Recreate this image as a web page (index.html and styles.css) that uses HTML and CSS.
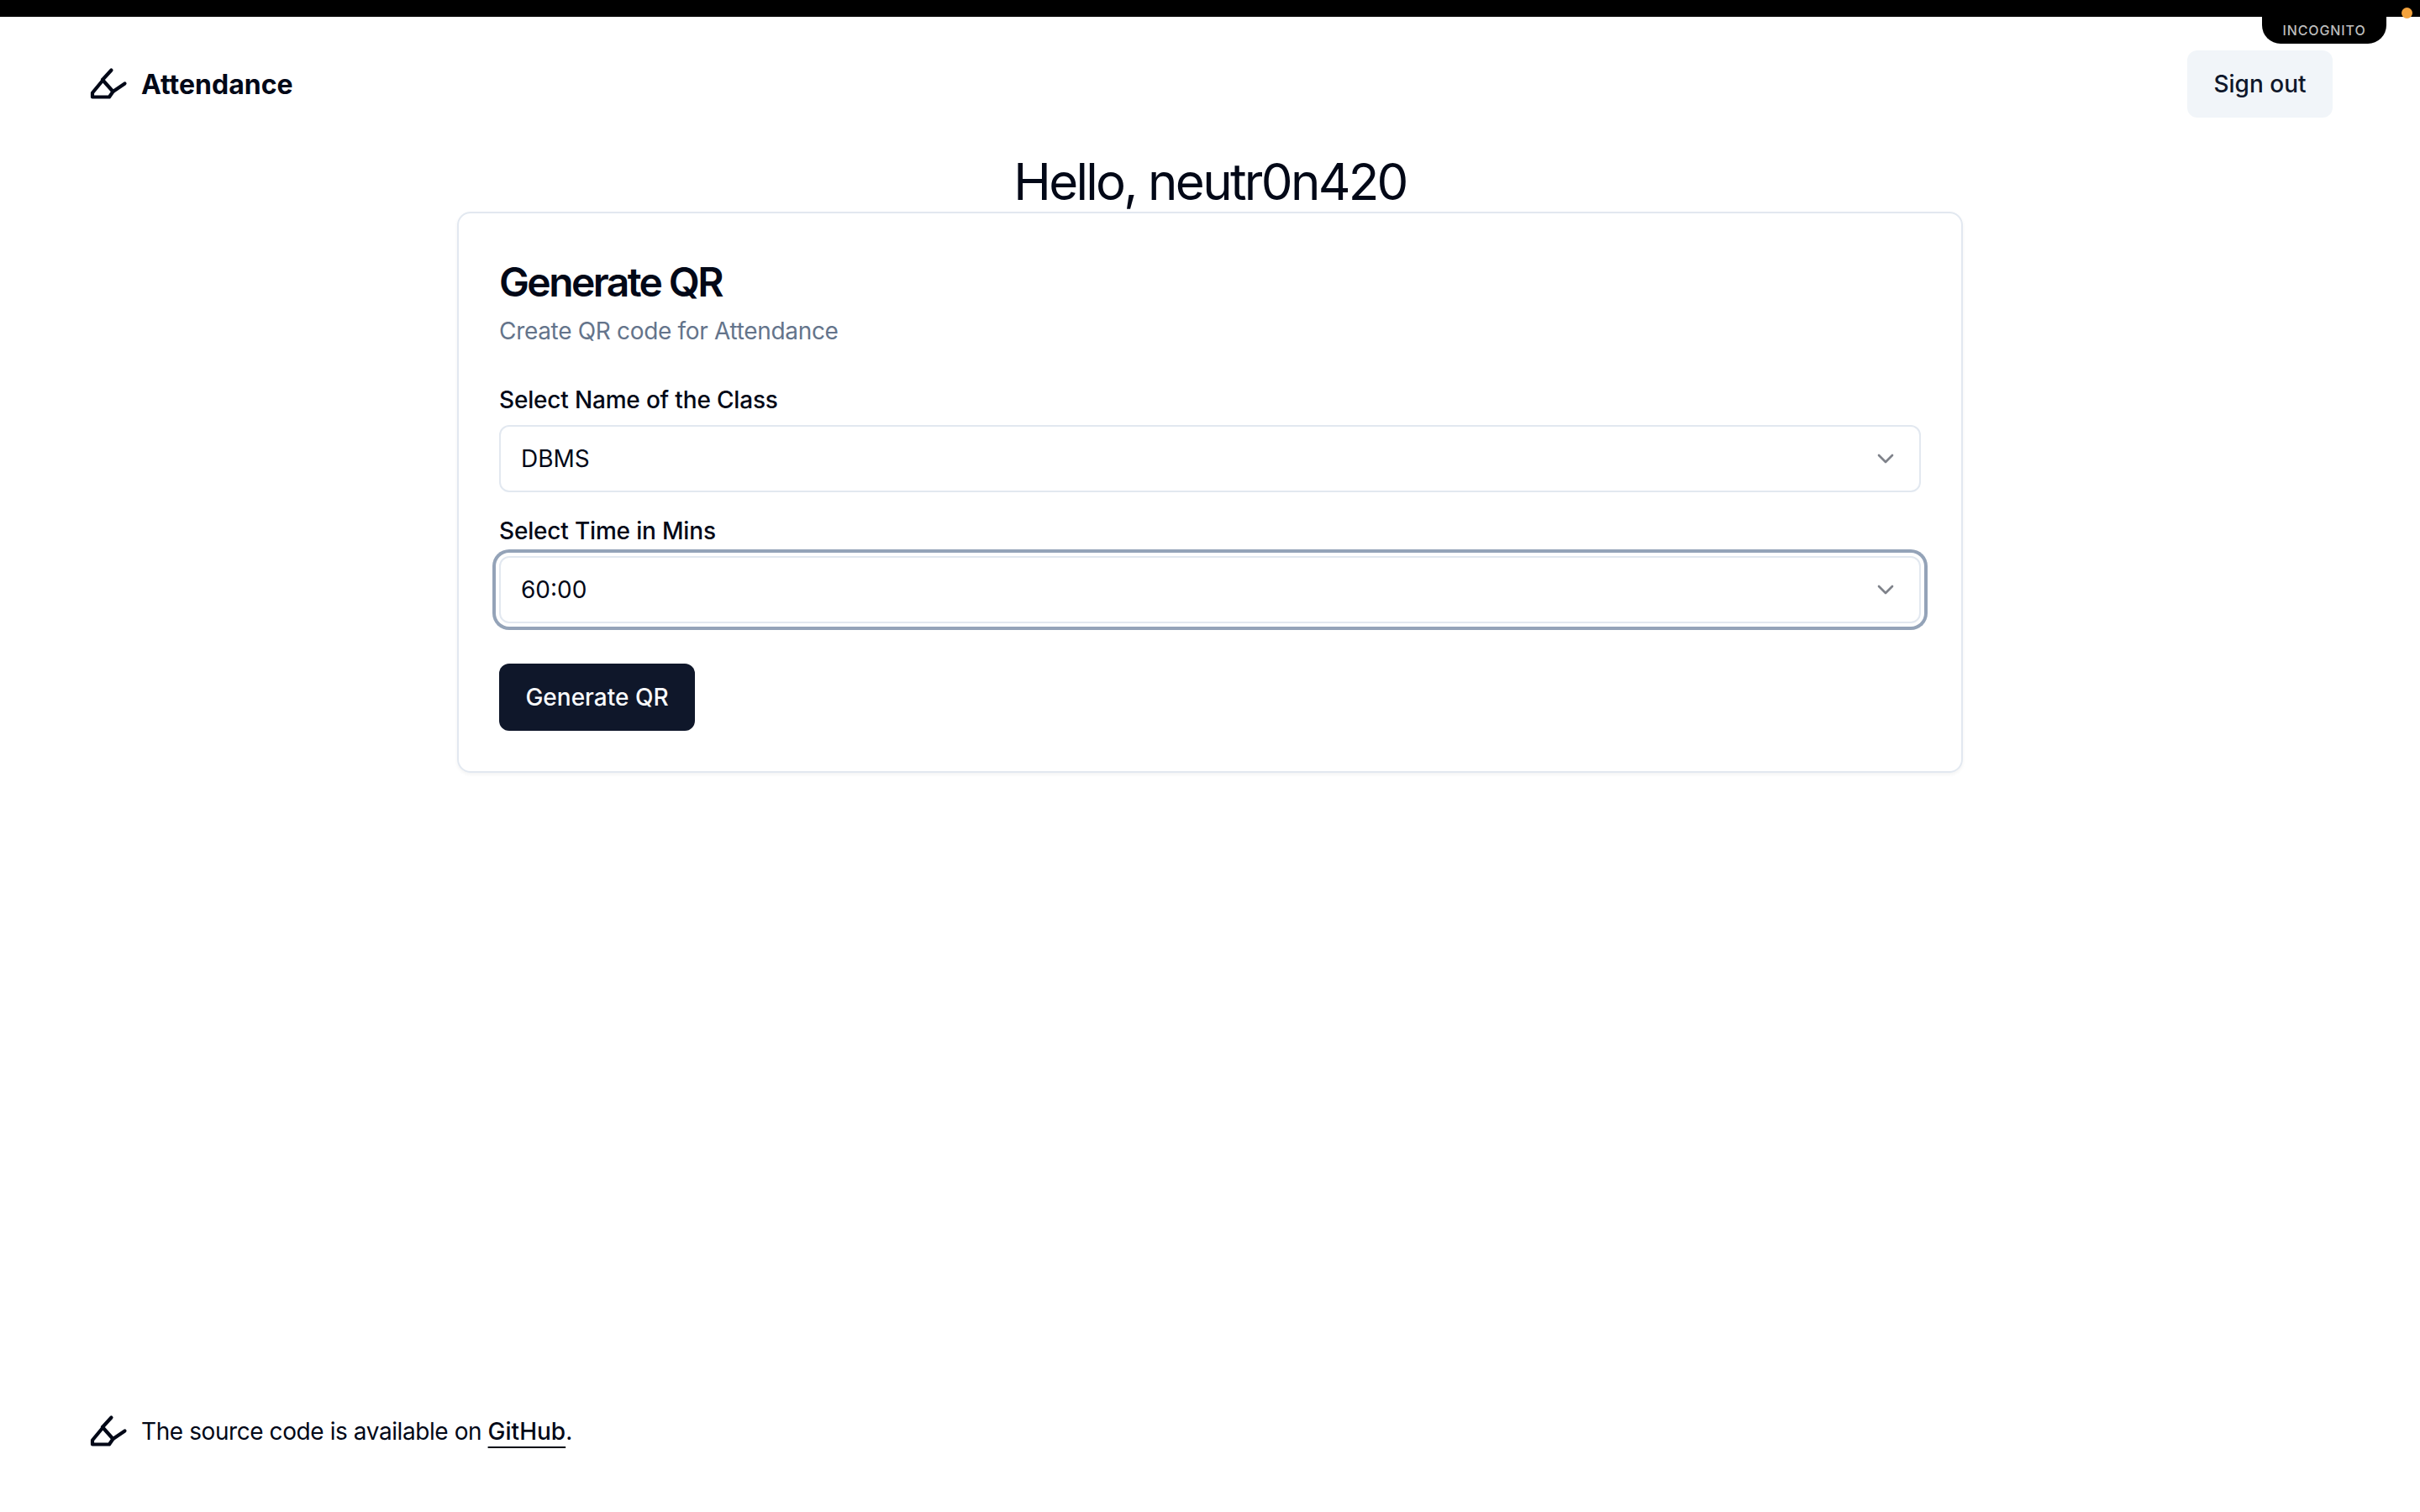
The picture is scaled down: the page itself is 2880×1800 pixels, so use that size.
FILE: index.html
```html
<!DOCTYPE html>
<html lang="en">
<head>
    <meta charset="UTF-8">
    <meta name="viewport" content="width=device-width, initial-scale=1.0">
    <title>Attendance</title>
    <link rel="stylesheet" href="styles.css">
</head>
<body>
    <div class="top-bar"></div>
    <div class="incognito">INCOGNITO</div>
    <div class="camera-dot"></div>

    <header class="site-header">
        <a class="brand" href="#">
            <svg class="logo" viewBox="0 0 48 48" fill="none" stroke="currentColor" stroke-width="4.2" stroke-linecap="round" stroke-linejoin="round">
                <path d="M28.5 7.5 18 19"/>
                <path d="M18 19 30.5 33 44.5 23.5"/>
                <path d="M18 20 6 34.5V39.5H26L30.5 33"/>
            </svg>
            <span>Attendance</span>
        </a>
        <button class="signout" type="button">Sign out</button>
    </header>

    <main class="main">
        <h1 class="greeting">Hello, neutr0n420</h1>
        <section class="card">
            <h2 class="card-title">Generate QR</h2>
            <p class="card-desc">Create QR code for Attendance</p>
            <form class="qr-form">
                <label class="field-label">Select Name of the Class</label>
                <button class="select" type="button">
                    <span>DBMS</span>
                    <svg class="chevron" viewBox="0 0 24 24" fill="none" stroke="currentColor" stroke-width="2" stroke-linecap="round" stroke-linejoin="round"><path d="m6 9 6 6 6-6"/></svg>
                </button>
                <label class="field-label field-label-next">Select Time in Mins</label>
                <button class="select select-focused" type="button">
                    <span>60:00</span>
                    <svg class="chevron" viewBox="0 0 24 24" fill="none" stroke="currentColor" stroke-width="2" stroke-linecap="round" stroke-linejoin="round"><path d="m6 9 6 6 6-6"/></svg>
                </button>
                <button class="primary" type="button">Generate QR</button>
            </form>
        </section>
    </main>

    <footer class="site-footer">
        <svg class="logo" viewBox="0 0 48 48" fill="none" stroke="currentColor" stroke-width="4.2" stroke-linecap="round" stroke-linejoin="round">
            <path d="M28.5 7.5 18 19"/>
            <path d="M18 19 30.5 33 44.5 23.5"/>
            <path d="M18 20 6 34.5V39.5H26L30.5 33"/>
        </svg>
        <p>The source code is available on <a href="#">GitHub</a>.</p>
    </footer>
</body>
</html>
```

FILE: styles.css
```css
* {
    margin: 0;
    padding: 0;
    box-sizing: border-box;
}

body {
    font-family: 'Inter', sans-serif;
    font-size: 28px;
    color: #020817;
    background: white;
    min-height: 100vh;
    display: flex;
    flex-direction: column;
}

button {
    font-family: inherit;
    font-size: 28px;
    border: none;
    cursor: pointer;
}

.top-bar {
    height: 20px;
    background: black;
}

.incognito {
    position: absolute;
    top: 20px;
    left: 2692px;
    width: 148px;
    height: 32px;
    background: black;
    color: #bdbdbd;
    font-size: 16px;
    font-weight: 500;
    letter-spacing: 0.9px;
    line-height: 32px;
    text-align: center;
    border-radius: 0 0 22px 22px;
}

.camera-dot {
    position: absolute;
    top: 9px;
    left: 2858px;
    width: 13px;
    height: 13px;
    border-radius: 50%;
    background: #f4a33d;
}

.site-header {
    display: flex;
    align-items: center;
    justify-content: space-between;
    padding: 40px 104px 0;
}

.brand {
    display: flex;
    align-items: center;
    gap: 16px;
    color: #020817;
    font-size: 32px;
    font-weight: 700;
    text-decoration: none;
}

.logo {
    width: 48px;
    height: 48px;
    flex-shrink: 0;
}

.signout {
    width: 173px;
    height: 80px;
    background: #f1f5f9;
    color: #0f172a;
    font-weight: 500;
    border-radius: 12px;
}

.main {
    display: flex;
    flex-direction: column;
    align-items: center;
}

.greeting {
    margin-top: 40px;
    font-size: 60px;
    line-height: 72px;
    font-weight: 400;
    letter-spacing: -2.7px;
}

.card {
    width: 1792px;
    padding: 48px;
    border: 2px solid #e2e8f0;
    border-radius: 16px;
    box-shadow: 0 2px 4px rgba(0,0,0,0.05);
}

.card-title {
    font-size: 48px;
    line-height: 68px;
    font-weight: 600;
    letter-spacing: -2.6px;
}

.card-desc {
    margin-top: 4px;
    line-height: 40px;
    color: #64748b;
    letter-spacing: -0.32px;
}

.qr-form {
    display: flex;
    flex-direction: column;
    align-items: flex-start;
    margin-top: 48px;
}

.field-label {
    font-weight: 500;
    line-height: 28px;
    margin-bottom: 16px;
    letter-spacing: -0.18px;
}

.field-label-next {
    margin-top: 32px;
}

.select {
    display: flex;
    align-items: center;
    justify-content: space-between;
    width: 100%;
    height: 80px;
    padding: 0 24px;
    background: white;
    color: #020817;
    border: 2px solid #e2e8f0;
    border-radius: 12px;
}

.select-focused {
    box-shadow: 0 0 0 4px white, 0 0 0 8px #94a3b8;
}

.chevron {
    width: 32px;
    height: 32px;
    opacity: 0.5;
}

.primary {
    margin-top: 48px;
    width: 233px;
    height: 80px;
    background: #0f172a;
    color: #f8fafc;
    font-weight: 500;
    border-radius: 12px;
}

.site-footer {
    margin-top: auto;
    display: flex;
    align-items: center;
    gap: 16px;
    padding: 0 104px 72px;
    letter-spacing: -0.42px;
}

.site-footer a {
    color: inherit;
    font-weight: 500;
    letter-spacing: 0;
    text-decoration: underline;
    text-decoration-thickness: 2px;
    text-underline-offset: 8px;
}
```
